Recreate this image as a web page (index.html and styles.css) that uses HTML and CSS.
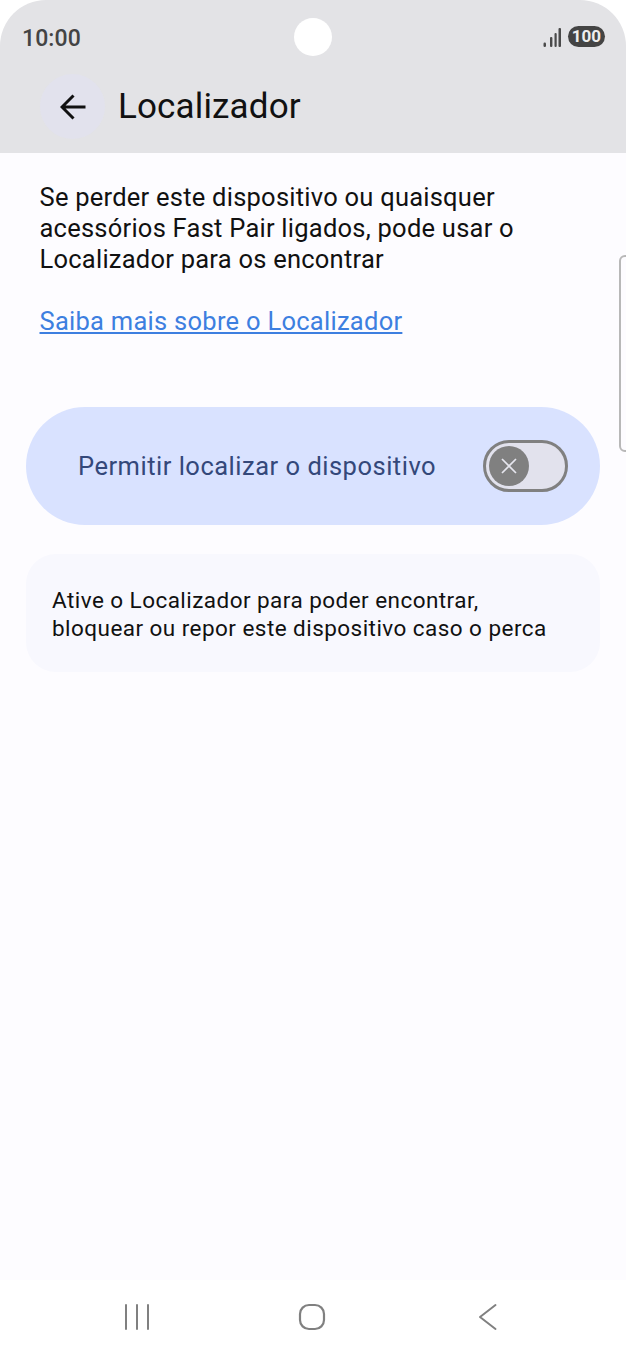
FILE: index.html
```html
<!DOCTYPE html>
<html lang="pt">
<head>
<meta charset="utf-8">
<title>Localizador</title>
<link rel="stylesheet" href="styles.css">
</head>
<body>
<div class="screen">
  <header class="top">
    <div class="status">
      <span class="time">10:00</span>
      <span class="camera"></span>
      <span class="status-right">
        <svg class="signal" width="18" height="19" viewBox="0 0 18 19"><g fill="#4a4a4a"><rect x="0.500" y="14.500" width="2.500" height="4.500" rx="1.200"/><rect x="7" y="9" width="2.400" height="10" rx="1"/><rect x="11.500" y="5" width="2.200" height="14" rx="1"/><rect x="15.500" y="0" width="2.500" height="19" rx="1"/></g></svg>
        <span class="battery">100</span>
      </span>
    </div>
    <div class="appbar">
      <span class="back">
        <svg width="26" height="26" viewBox="0 0 26 26"><path d="M25.500 13H2M13.500 1.500 2 13l11.500 11.500" fill="none" stroke="#111" stroke-width="3"/></svg>
      </span>
      <h1 class="title">Localizador</h1>
    </div>
  </header>
  <main class="content">
    <p class="intro">Se perder este dispositivo ou quaisquer acessórios Fast Pair ligados, pode usar o Localizador para os encontrar</p>
    <a class="link" href="#">Saiba mais sobre o Localizador</a>
    <section class="toggle-card">
      <span class="toggle-label">Permitir localizar o dispositivo</span>
      <span class="switch">
        <span class="thumb">
          <svg width="16" height="16" viewBox="0 0 16 16"><path d="M1 1l14 14M15 1 1 15" stroke="#e6e6ee" stroke-width="1.700" fill="none"/></svg>
        </span>
      </span>
    </section>
    <section class="info-card">Ative o Localizador para poder encontrar, bloquear ou repor este dispositivo caso o perca</section>
  </main>
  <nav class="navbar">
    <svg width="26" height="26" viewBox="0 0 26 26"><path d="M2 1v24M13 1v24M24 1v24" stroke="#808080" stroke-width="2" stroke-linecap="round" fill="none"/></svg>
    <svg width="28" height="28" viewBox="0 0 28 28"><rect x="2" y="2" width="24" height="24" rx="9" stroke="#808080" stroke-width="2.200" fill="none"/></svg>
    <svg width="24" height="28" viewBox="0 0 24 28"><path d="M21.500 2 6 14l15.500 12" stroke="#808080" stroke-width="2" stroke-linecap="round" stroke-linejoin="round" fill="none"/></svg>
  </nav>
  <div class="scroll-hint"></div>
</div>
</body>
</html>
```
FILE: styles.css
```css
* { box-sizing: border-box; }
html, body { margin: 0; padding: 0; background: #fff; }
body { font-family: Roboto, "Liberation Sans", sans-serif; }
.screen {
  position: relative;
  width: 626px;
  height: 1358px;
  display: flex;
  flex-direction: column;
  overflow: hidden;
  background: #fff;
}
.top {
  height: 153px;
  background: #e3e3e6;
  border-radius: 46px 46px 0 0;
  flex: none;
}
.status {
  height: 74px;
  display: flex;
  align-items: flex-start;
  justify-content: space-between;
  padding: 0 21px 0 22px;
  position: relative;
}
.time {
  font-size: 23px;
  line-height: 27px;
  margin-top: 25px;
  color: #444;
  font-weight: 500;
  letter-spacing: .1px;
}
.camera {
  position: absolute;
  left: 294px;
  top: 18px;
  width: 38px;
  height: 38px;
  border-radius: 50%;
  background: #fff;
}
.status-right {
  display: flex;
  align-items: flex-end;
  gap: 7px;
  margin-top: 26px;
}
.signal { display: block; }
.battery {
  width: 37px;
  height: 21px;
  border-radius: 11px;
  background: #444;
  color: #eee;
  font-size: 17px;
  font-weight: 700;
  line-height: 21px;
  text-align: center;
}
.appbar {
  display: flex;
  align-items: center;
  padding-left: 40px;
  gap: 13px;
}
.back {
  width: 65px;
  height: 65px;
  border-radius: 50%;
  background: #e2e2ed;
  display: flex;
  align-items: center;
  justify-content: center;
}
.title {
  margin: 0;
  font-size: 35px;
  line-height: 44px;
  font-weight: 400;
  letter-spacing: .15px;
  color: #111;
}
.content {
  flex: 1;
  background: #fdfcff;
  padding: 29px 26px 0;
}
.intro {
  margin: 0;
  padding: 0 13.500px;
  font-size: 25.500px;
  line-height: 31px;
  letter-spacing: .24px;
  color: #111;
}
.link {
  display: block;
  margin: 31px 0 0 13.500px;
  font-size: 25.500px;
  line-height: 31px;
  letter-spacing: .27px;
  color: #3d7fe0;
  text-decoration: underline;
}
.toggle-card {
  margin-top: 70px;
  height: 118px;
  border-radius: 59px;
  background: #d9e2ff;
  display: flex;
  align-items: center;
  justify-content: space-between;
  padding: 0 32px 0 52px;
}
.toggle-label {
  font-size: 25.500px;
  letter-spacing: .5px;
  color: #34487a;
}
.switch {
  width: 85px;
  height: 52px;
  border-radius: 26px;
  border: 3.500px solid #808080;
  background: #e2e2ed;
  display: flex;
  align-items: center;
  padding-left: 2.500px;
}
.thumb {
  width: 40px;
  height: 40px;
  border-radius: 50%;
  background: #808080;
  display: flex;
  align-items: center;
  justify-content: center;
}
.info-card {
  margin-top: 29px;
  height: 118px;
  border-radius: 30px;
  background: #f8f8fe;
  padding: 32px 50px 0 26px;
  font-size: 22.500px;
  line-height: 28px;
  letter-spacing: .45px;
  color: #111;
}
.navbar {
  height: 78px;
  flex: none;
  background: #fff;
  display: flex;
  align-items: center;
  gap: 148px;
  padding: 0 0 4px 124px;
}
.scroll-hint {
  position: absolute;
  left: 619px;
  top: 255px;
  width: 12px;
  height: 197px;
  border: 2px solid #b8b8b8;
  border-radius: 8px;
}
```
